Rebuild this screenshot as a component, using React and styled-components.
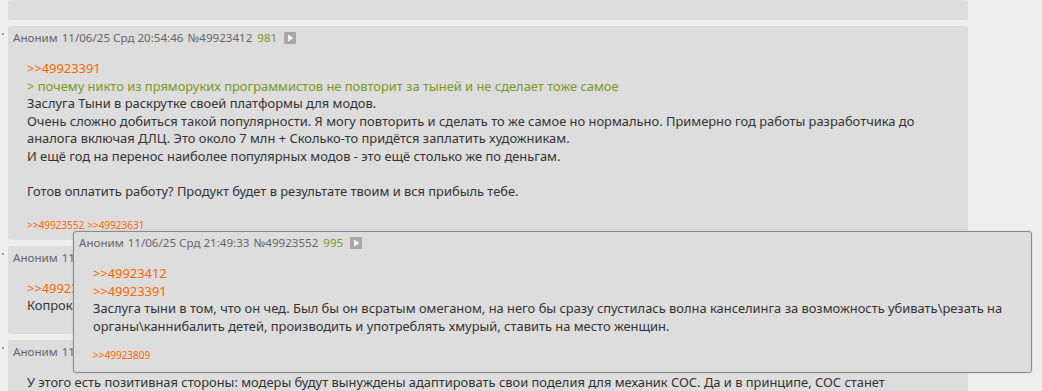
import React from "react";
import styled, { createGlobalStyle } from "styled-components";

const Global = createGlobalStyle`
  html, body { margin: 0; padding: 0; background: #eeeeee; }
  body { font-family: "Noto Sans", "DejaVu Sans", sans-serif; color: #333333; overflow: hidden; }
`;

const Thread = styled.div`
  position: relative;
  display: flex;
  flex-direction: column;
  gap: 6px;
`;

const Row = styled.div`
  display: flex;
  align-items: flex-start;
`;

const Marker = styled.div`
  width: 8px;
  flex: none;
  position: relative;
  align-self: stretch;
  &::before {
    content: "";
    display: ${(p) => (p.$hidden ? "none" : "block")};
    position: absolute;
    left: 2px;
    top: 7px;
    width: 2px;
    height: 2px;
    background: #9a9a9a;
  }
`;

const Post = styled.div`
  box-sizing: border-box;
  width: 960px;
  background: #dddddd;
  border-radius: 3px;
  padding: 4px 6px 8px 5px;
  height: ${(p) => (p.$height ? `${p.$height}px` : "auto")};
`;

const Popup = styled.div`
  position: absolute;
  left: 73px;
  top: 231px;
  box-sizing: border-box;
  width: 959px;
  background: #dddddd;
  border: 1px solid #8a8a8a;
  border-radius: 3px;
  padding: 3px 6px 10px 5px;
  box-shadow: 0 0 2px rgba(0, 0, 0, 0.15);
`;

const Header = styled.div`
  display: flex;
  align-items: center;
  gap: 4px;
  font-size: 11.6px;
  line-height: 16px;
  color: #666666;
  white-space: nowrap;
`;

const Count = styled.span`
  color: #789922;
  margin-left: 1px;
`;

const PlayBtn = styled.span`
  display: inline-flex;
  align-items: center;
  justify-content: center;
  width: 12px;
  height: 12px;
  background: #a8a8a8;
  border-radius: 1px;
  margin-left: 3px;
`;

const Message = styled.div`
  margin: 14px 0 11px 14px;
  font-size: 12.9px;
  line-height: 17.6px;
  color: #333333;
  white-space: nowrap;
`;

const Line = styled.div`
  min-height: 17.6px;
`;

const Link = styled.span`
  color: #ff6600;
`;

const Quote = styled.span`
  color: #789922;
`;

const Replies = styled.div`
  margin: ${(p) => (p.$popup ? "14px" : "18px")} 0 0 14px;
  font-size: 10px;
  line-height: 13px;
  color: #ff6600;
  display: flex;
  gap: 3px;
`;

const PlayIcon = () => (
  <PlayBtn>
    <svg width="7" height="8" viewBox="0 0 7 8">
      <path d="M1 0.5 L6.5 4 L1 7.5 Z" fill="#f4f4f4" />
    </svg>
  </PlayBtn>
);

const PostHeader = ({ date, num, count }) => (
  <Header>
    <span>Аноним</span>
    <span>{date}</span>
    <span>№{num}</span>
    <Count>{count}</Count>
    <PlayIcon />
  </Header>
);

export default function App() {
  return (
    <>
      <Global />
      <Thread>
        <Row>
          <Marker $hidden />
          <Post $height={20} />
        </Row>

        <Row>
          <Marker />
          <Post>
            <PostHeader date="11/06/25 Срд 20:54:46" num="49923412" count="981" />
            <Message>
              <Line><Link>&gt;&gt;49923391</Link></Line>
              <Line><Quote>&gt; почему никто из пряморуких программистов не повторит за тыней и не сделает тоже самое</Quote></Line>
              <Line>Заслуга Тыни в раскрутке своей платформы для модов.</Line>
              <Line>Очень сложно добиться такой популярности. Я могу повторить и сделать то же самое но нормально. Примерно год работы разработчика до</Line>
              <Line>аналога включая ДЛЦ. Это около 7 млн + Сколько-то придётся заплатить художникам.</Line>
              <Line>И ещё год на перенос наиболее популярных модов - это ещё столько же по деньгам.</Line>
              <Line />
              <Line>Готов оплатить работу? Продукт будет в результате твоим и вся прибыль тебе.</Line>
            </Message>
            <Replies>
              <span>&gt;&gt;49923552</span>
              <span>&gt;&gt;49923631</span>
            </Replies>
          </Post>
        </Row>

        <Row>
          <Marker />
          <Post>
            <PostHeader date="11/06/25 Срд 21:52:08" num="49923631" count="997" />
            <Message>
              <Line><Link>&gt;&gt;49923412</Link></Line>
              <Line>Копрокал это, а не платформа.</Line>
            </Message>
          </Post>
        </Row>

        <Row>
          <Marker />
          <Post>
            <PostHeader date="11/06/25 Срд 21:55:41" num="49923657" count="999" />
            <Message>
              <Line>У этого есть позитивная стороны: модеры будут вынуждены адаптировать свои поделия для механик СОС. Да и в принципе, СОС станет</Line>
              <Line>лучше для всех.</Line>
            </Message>
          </Post>
        </Row>

        <Popup>
          <PostHeader date="11/06/25 Срд 21:49:33" num="49923552" count="995" />
          <Message>
            <Line><Link>&gt;&gt;49923412</Link></Line>
            <Line><Link>&gt;&gt;49923391</Link></Line>
            <Line>Заслуга тыни в том, что он чед. Был бы он всратым омеганом, на него бы сразу спустилась волна канселинга за возможность убивать\резать на</Line>
            <Line>органы\каннибалить детей, производить и употреблять хмурый, ставить на место женщин.</Line>
          </Message>
          <Replies $popup>
            <span>&gt;&gt;49923809</span>
          </Replies>
        </Popup>
      </Thread>
    </>
  );
}
